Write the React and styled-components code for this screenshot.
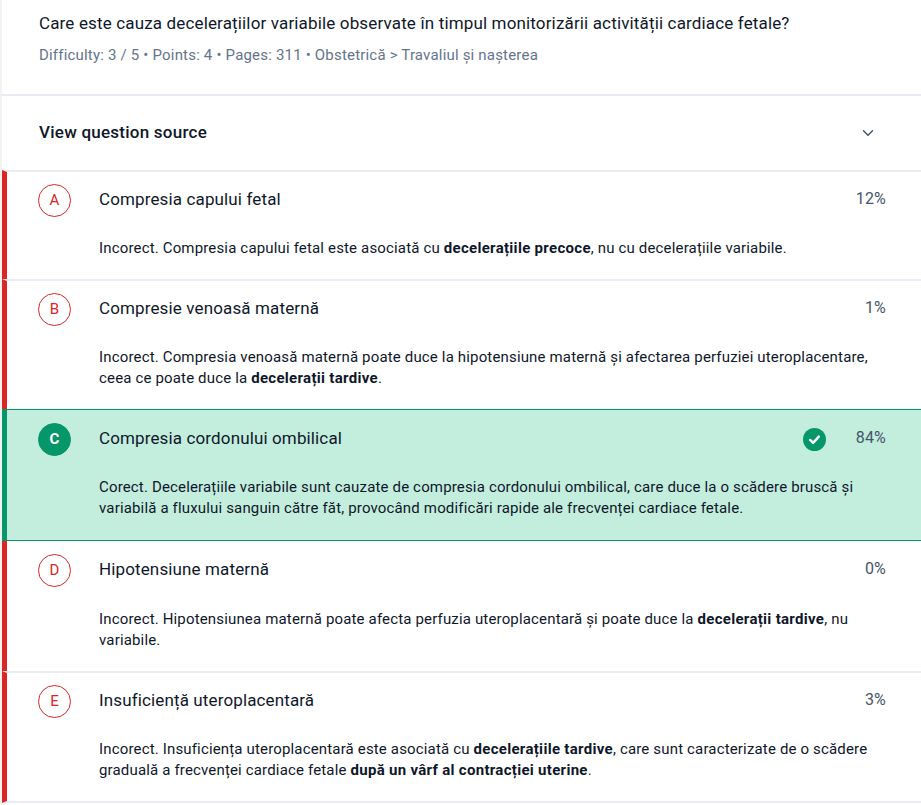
import React from 'react'
import styled, { createGlobalStyle } from 'styled-components'
import { ChevronDown } from 'lucide-react'

const GlobalStyle = createGlobalStyle`
  html, body {
    margin: 0;
    padding: 0;
    background: #f2f2ef;
  }
  body {
    font-family: Roboto, "Liberation Sans", sans-serif;
    color: #0f172a;
  }
`

const Panel = styled.div`
  margin-left: 2px;
  background: #fff;
  height: 805px;
  overflow: hidden;
`

const Header = styled.header`
  height: 96px;
  box-sizing: border-box;
  padding: 11px 36px 0 37px;
  border-bottom: 2px solid #e7eaf1;
`

const Question = styled.h1`
  margin: 0;
  font-size: 17px;
  line-height: 24px;
  font-weight: 400;
  letter-spacing: 0.15px;
  color: #0f172a;
`

const Meta = styled.p`
  margin: 8px 0 0;
  font-size: 15px;
  line-height: 24px;
  letter-spacing: 0.19px;
  color: #64748b;
`

const Source = styled.div`
  height: 74px;
  box-sizing: border-box;
  padding: 0 44px 2px 37px;
  display: flex;
  align-items: center;
  justify-content: space-between;
  font-size: 17px;
  font-weight: 500;
  letter-spacing: 0.24px;
  color: #0f172a;
  svg {
    color: #475569;
    margin-top: 2px;
  }
`

const Row = styled.section`
  box-sizing: border-box;
  height: ${({ $height }) => $height}px;
  padding: ${({ $correct }) => ($correct ? 13 : 12)}px 35px 0 31px;
  border-left: 5px solid ${({ $correct }) => ($correct ? '#059669' : '#dc2626')};
  border-top: ${({ $correct }) => ($correct ? '1px solid #059669' : '2px solid #e9edf3')};
  border-bottom: ${({ $correct, $last }) => ($correct ? '1px solid #059669' : $last ? '2px solid #e9edf3' : '0')};
  background: ${({ $correct }) => ($correct ? '#c3eddd' : '#fff')};
  ${({ $afterCorrect }) => $afterCorrect && 'border-top: 0; padding-top: 13px;'}
`

const Top = styled.div`
  display: flex;
  align-items: center;
  min-height: 33px;
`

const Badge = styled.div`
  flex: none;
  width: 33px;
  height: 33px;
  box-sizing: border-box;
  border-radius: 50%;
  display: flex;
  align-items: center;
  justify-content: center;
  font-size: 15px;
  padding-bottom: 2px;
  font-weight: ${({ $correct }) => ($correct ? 700 : 400)};
  color: ${({ $correct }) => ($correct ? '#fff' : '#dc2626')};
  background: ${({ $correct }) => ($correct ? '#059669' : 'transparent')};
  border: 1.5px solid ${({ $correct }) => ($correct ? '#059669' : '#dc2626')};
  margin-right: 28px;
`

const Label = styled.div`
  flex: 1;
  font-size: 17px;
  line-height: 24px;
  letter-spacing: 0.13px;
  margin-top: -4px;
`

const Tick = styled.svg`
  width: 23px;
  height: 23px;
  margin-right: 28px;
`

const Percent = styled.div`
  width: 32px;
  text-align: right;
  font-size: 16px;
  line-height: 24px;
  letter-spacing: 0.2px;
  margin-top: -3px;
  color: #475569;
`

const Body = styled.p`
  margin: ${({ $afterCorrect }) => ($afterCorrect ? 22 : 21)}px 0 0 61px;
  font-size: 15px;
  line-height: 21px;
  letter-spacing: 0.16px;
  color: #0f172a;
  b {
    font-weight: 700;
    letter-spacing: 0.3px;
  }
`

const options = [
  {
    letter: 'A',
    label: 'Compresia capului fetal',
    percent: '12%',
    height: 109,
    text: (
      <>
        Incorect. Compresia capului fetal este asociată cu <b>decelerațiile precoce</b>, nu cu decelerațiile variabile.
      </>
    ),
  },
  {
    letter: 'B',
    label: 'Compresie venoasă maternă',
    percent: '1%',
    height: 130,
    text: (
      <>
        Incorect. Compresia venoasă maternă poate duce la hipotensiune maternă și afectarea perfuziei uteroplacentare,
        ceea ce poate duce la <b>decelerații tardive</b>.
      </>
    ),
  },
  {
    letter: 'C',
    label: 'Compresia cordonului ombilical',
    percent: '84%',
    height: 132,
    correct: true,
    text: (
      <>
        Corect. Decelerațiile variabile sunt cauzate de compresia cordonului ombilical, care duce la o scădere bruscă și
        variabilă a fluxului sanguin către făt, provocând modificări rapide ale frecvenței cardiace fetale.
      </>
    ),
  },
  {
    letter: 'D',
    label: 'Hipotensiune maternă',
    percent: '0%',
    height: 130,
    afterCorrect: true,
    text: (
      <>
        Incorect. Hipotensiunea maternă poate afecta perfuzia uteroplacentară și poate duce la <b>decelerații tardive</b>, nu
        variabile.
      </>
    ),
  },
  {
    letter: 'E',
    label: 'Insuficiență uteroplacentară',
    percent: '3%',
    height: 132,
    last: true,
    text: (
      <>
        Incorect. Insuficiența uteroplacentară este asociată cu <b>decelerațiile tardive</b>, care sunt caracterizate de o scădere
        graduală a frecvenței cardiace fetale <b>după un vârf al contracției uterine</b>.
      </>
    ),
  },
]

const Option = ({ letter, label, percent, height, correct, last, afterCorrect, text }) => (
  <Row $height={height} $correct={correct} $last={last} $afterCorrect={afterCorrect}>
    <Top>
      <Badge $correct={correct}>{letter}</Badge>
      <Label>{label}</Label>
      {correct && (
        <Tick viewBox="0 0 24 24">
          <circle cx="12" cy="12" r="12" fill="#059669" />
          <path d="M7.5 12.5l3 3 6-6.5" fill="none" stroke="#fff" strokeWidth="2.6" strokeLinecap="round" strokeLinejoin="round" />
        </Tick>
      )}
      <Percent>{percent}</Percent>
    </Top>
    <Body $afterCorrect={afterCorrect}>{text}</Body>
  </Row>
)

export default function App() {
  return (
    <>
      <GlobalStyle />
      <Panel>
        <Header>
          <Question>Care este cauza decelerațiilor variabile observate în timpul monitorizării activității cardiace fetale?</Question>
          <Meta>Difficulty: 3 / 5 • Points: 4 • Pages: 311 • Obstetrică &gt; Travaliul și nașterea</Meta>
        </Header>
        <Source>
          View question source
          <ChevronDown size={18} strokeWidth={2} />
        </Source>
        {options.map((option) => (
          <Option key={option.letter} {...option} />
        ))}
      </Panel>
    </>
  )
}
